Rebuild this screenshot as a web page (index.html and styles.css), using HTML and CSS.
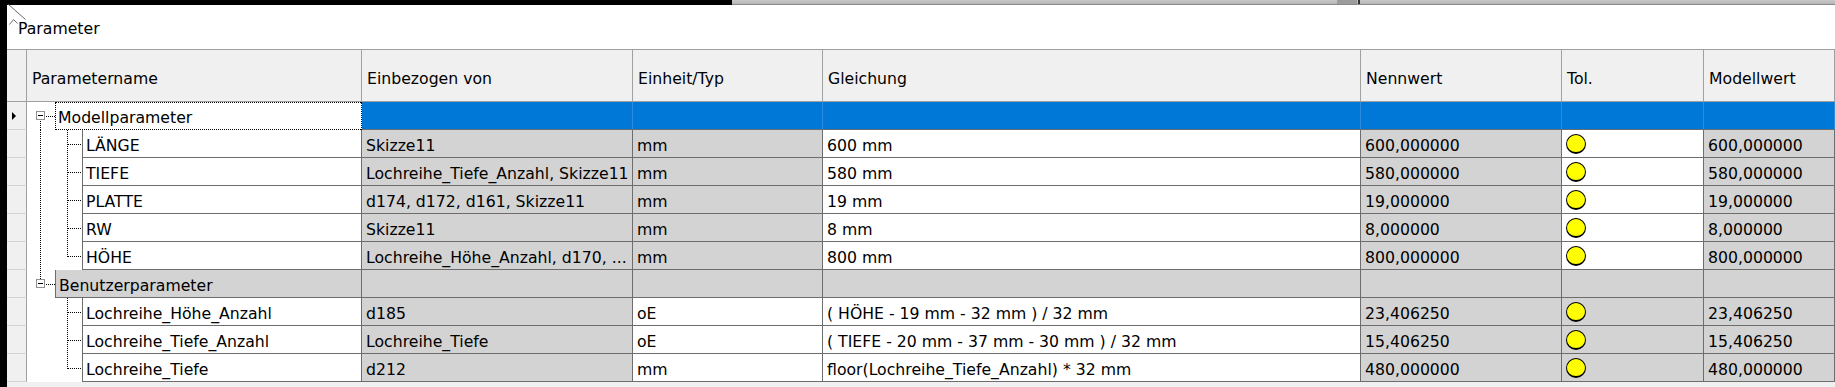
FILE: index.html
```html
<!DOCTYPE html>
<html lang="de">
<head>
  <meta charset="UTF-8" />
  <title>Parameter</title>
  <link rel="stylesheet" href="styles.css">
</head>
<body>

<div class="topbar">
  <div class="topbar-dark"></div>
  <div class="topbar-strip"><span class="thumb"></span><span class="grip"></span></div>
</div>

<div class="frame">
  <div class="edge"></div>
  <div class="window">
    <div class="title">Parameter</div>

    <div class="grid">
      <!-- column headers -->
      <div class="row head">
        <div class="cell rh"></div>
        <div class="cell">Parametername</div>
        <div class="cell">Einbezogen von</div>
        <div class="cell">Einheit/Typ</div>
        <div class="cell">Gleichung</div>
        <div class="cell">Nennwert</div>
        <div class="cell">Tol.</div>
        <div class="cell">Modellwert</div>
      </div>

      <!-- Modellparameter -->
      <div class="row sel">
        <div class="cell rh"><span class="arrow"></span></div>
        <div class="cell name focus">
          <svg class="tree group" width="28" height="28">
            <line x1="13.5" y1="19" x2="13.5" y2="28" class="dots"/>
            <line x1="19" y1="14.5" x2="28" y2="14.5" class="dots"/>
            <rect x="9.5" y="9.5" width="8" height="8" class="box"/>
            <line x1="11" y1="13.5" x2="16" y2="13.5" class="minus"/>
          </svg>
          <div class="label">Modellparameter</div>
        </div>
        <div class="cell"></div>
        <div class="cell"></div>
        <div class="cell"></div>
        <div class="cell"></div>
        <div class="cell"></div>
        <div class="cell"></div>
      </div>

      <div class="row">
        <div class="cell rh"></div>
        <div class="cell name">
          <svg class="tree child" width="55" height="28">
            <line x1="13.5" y1="0" x2="13.5" y2="28" class="dots"/>
            <line x1="40.5" y1="0" x2="40.5" y2="28" class="dots"/>
            <line x1="41" y1="14.5" x2="55" y2="14.5" class="dots"/>
          </svg>
          <div class="label">LÄNGE</div>
        </div>
        <div class="cell g">Skizze11</div>
        <div class="cell g">mm</div>
        <div class="cell">600 mm</div>
        <div class="cell g">600,000000</div>
        <div class="cell tol"><span class="dot"></span></div>
        <div class="cell g">600,000000</div>
      </div>

      <div class="row">
        <div class="cell rh"></div>
        <div class="cell name">
          <svg class="tree child" width="55" height="28">
            <line x1="13.5" y1="0" x2="13.5" y2="28" class="dots"/>
            <line x1="40.5" y1="0" x2="40.5" y2="28" class="dots"/>
            <line x1="41" y1="14.5" x2="55" y2="14.5" class="dots"/>
          </svg>
          <div class="label">TIEFE</div>
        </div>
        <div class="cell g">Lochreihe_Tiefe_Anzahl, Skizze11</div>
        <div class="cell g">mm</div>
        <div class="cell">580 mm</div>
        <div class="cell g">580,000000</div>
        <div class="cell tol"><span class="dot"></span></div>
        <div class="cell g">580,000000</div>
      </div>

      <div class="row">
        <div class="cell rh"></div>
        <div class="cell name">
          <svg class="tree child" width="55" height="28">
            <line x1="13.5" y1="0" x2="13.5" y2="28" class="dots"/>
            <line x1="40.5" y1="0" x2="40.5" y2="28" class="dots"/>
            <line x1="41" y1="14.5" x2="55" y2="14.5" class="dots"/>
          </svg>
          <div class="label">PLATTE</div>
        </div>
        <div class="cell g">d174, d172, d161, Skizze11</div>
        <div class="cell g">mm</div>
        <div class="cell">19 mm</div>
        <div class="cell g">19,000000</div>
        <div class="cell tol"><span class="dot"></span></div>
        <div class="cell g">19,000000</div>
      </div>

      <div class="row">
        <div class="cell rh"></div>
        <div class="cell name">
          <svg class="tree child" width="55" height="28">
            <line x1="13.5" y1="0" x2="13.5" y2="28" class="dots"/>
            <line x1="40.5" y1="0" x2="40.5" y2="28" class="dots"/>
            <line x1="41" y1="14.5" x2="55" y2="14.5" class="dots"/>
          </svg>
          <div class="label">RW</div>
        </div>
        <div class="cell g">Skizze11</div>
        <div class="cell g">mm</div>
        <div class="cell">8 mm</div>
        <div class="cell g">8,000000</div>
        <div class="cell tol"><span class="dot"></span></div>
        <div class="cell g">8,000000</div>
      </div>

      <div class="row">
        <div class="cell rh"></div>
        <div class="cell name">
          <svg class="tree child" width="55" height="28">
            <line x1="13.5" y1="0" x2="13.5" y2="28" class="dots"/>
            <line x1="40.5" y1="0" x2="40.5" y2="15" class="dots"/>
            <line x1="41" y1="14.5" x2="55" y2="14.5" class="dots"/>
          </svg>
          <div class="label">HÖHE</div>
        </div>
        <div class="cell g">Lochreihe_Höhe_Anzahl, d170, ...</div>
        <div class="cell g">mm</div>
        <div class="cell">800 mm</div>
        <div class="cell g">800,000000</div>
        <div class="cell tol"><span class="dot"></span></div>
        <div class="cell g">800,000000</div>
      </div>

      <!-- Benutzerparameter -->
      <div class="row grey">
        <div class="cell rh"></div>
        <div class="cell name">
          <svg class="tree group" width="28" height="28">
            <line x1="13.5" y1="0" x2="13.5" y2="10" class="dots"/>
            <line x1="19" y1="14.5" x2="28" y2="14.5" class="dots"/>
            <rect x="9.5" y="9.5" width="8" height="8" class="box"/>
            <line x1="11" y1="13.5" x2="16" y2="13.5" class="minus"/>
          </svg>
          <div class="label g">Benutzerparameter</div>
        </div>
        <div class="cell g"></div>
        <div class="cell g"></div>
        <div class="cell g"></div>
        <div class="cell g"></div>
        <div class="cell g"></div>
        <div class="cell g"></div>
      </div>

      <div class="row">
        <div class="cell rh"></div>
        <div class="cell name">
          <svg class="tree child" width="55" height="28">
            <line x1="40.5" y1="0" x2="40.5" y2="28" class="dots"/>
            <line x1="41" y1="14.5" x2="55" y2="14.5" class="dots"/>
          </svg>
          <div class="label">Lochreihe_Höhe_Anzahl</div>
        </div>
        <div class="cell g">d185</div>
        <div class="cell">oE</div>
        <div class="cell">( HÖHE - 19 mm - 32 mm ) / 32 mm</div>
        <div class="cell g">23,406250</div>
        <div class="cell g tol"><span class="dot"></span></div>
        <div class="cell g">23,406250</div>
      </div>

      <div class="row">
        <div class="cell rh"></div>
        <div class="cell name">
          <svg class="tree child" width="55" height="28">
            <line x1="40.5" y1="0" x2="40.5" y2="28" class="dots"/>
            <line x1="41" y1="14.5" x2="55" y2="14.5" class="dots"/>
          </svg>
          <div class="label">Lochreihe_Tiefe_Anzahl</div>
        </div>
        <div class="cell g">Lochreihe_Tiefe</div>
        <div class="cell">oE</div>
        <div class="cell">( TIEFE - 20 mm - 37 mm - 30 mm ) / 32 mm</div>
        <div class="cell g">15,406250</div>
        <div class="cell g tol"><span class="dot"></span></div>
        <div class="cell g">15,406250</div>
      </div>

      <div class="row">
        <div class="cell rh"></div>
        <div class="cell name">
          <svg class="tree child" width="55" height="28">
            <line x1="40.5" y1="0" x2="40.5" y2="15" class="dots"/>
            <line x1="41" y1="14.5" x2="55" y2="14.5" class="dots"/>
          </svg>
          <div class="label">Lochreihe_Tiefe</div>
        </div>
        <div class="cell g">d212</div>
        <div class="cell">mm</div>
        <div class="cell">floor(Lochreihe_Tiefe_Anzahl) * 32 mm</div>
        <div class="cell g">480,000000</div>
        <div class="cell g tol"><span class="dot"></span></div>
        <div class="cell g">480,000000</div>
      </div>
    </div>
  </div>
</div>

<!-- mouse pointer left over the window -->
<svg class="cursor" width="30" height="30">
  <polyline points="8.5,4.5 25.5,19.5" />
  <polyline points="9.5,24.5 13.5,19.5 17.5,23.5" />
</svg>

</body>
</html>
```

FILE: styles.css
```css
/* Base */
body {
  margin: 0;
  background: #000;
  font-family: "DejaVu Sans", sans-serif;
  font-size: 15.7px;
  color: #000;
  overflow: hidden;
}

/* top strip of the screen */
.topbar {
  display: flex;
  height: 5px;
}

.topbar-dark {
  width: 732px;
  background: #000;
}

.topbar-strip {
  flex: 1;
  display: flex;
  background: linear-gradient(#c9c9c9, #b5b5b5);
  border-bottom: 1px solid #8a8a8a;
  padding-left: 605px;
}

.topbar-strip .thumb {
  width: 20px;
  background: #9c9c9c;
}

.topbar-strip .grip {
  width: 2px;
  margin-left: 1px;
  background: #333;
}

.frame {
  display: flex;
  height: 382px;
}

.edge {
  width: 7px;
  background: #000;
}

.window {
  flex: 1;
  display: flex;
  flex-direction: column;
  background: #fff;
}

.title {
  height: 44px;
  display: flex;
  align-items: center;
  padding-left: 11px;
  padding-top: 2px;
  box-sizing: border-box;
}

/* Grid */
.grid {
  flex: 1;
  background: #f0f0f0;
  border-top: 1px solid #a0a0a0;
}

.row {
  display: grid;
  grid-template-columns: 20px 335px 271px 190px 538px 201px 142px 1fr;
  height: 28px;
}

.cell {
  display: flex;
  align-items: center;
  padding: 3px 4px 0;
  background: #fff;
  border-right: 1px solid #6d6d6d;
  border-bottom: 1px solid #6d6d6d;
  white-space: nowrap;
  overflow: hidden;
  box-sizing: border-box;
}

.cell.g {
  background: #d3d3d3;
}

.row.head {
  height: 52px;
}

.row.head .cell {
  background: #f0f0f0;
  border-right-color: #a0a0a0;
  border-bottom-color: #a0a0a0;
  padding-left: 5px;
  padding-top: 5px;
}

.cell.rh {
  background: #f0f0f0;
  padding: 0;
  border-right-color: #a0a0a0;
  border-bottom-color: #d4d4d4;
}

.row.head .cell.rh {
  border-bottom-color: #a0a0a0;
}

.arrow {
  margin-left: 5px;
  width: 0;
  height: 0;
  border-top: 4px solid transparent;
  border-bottom: 4px solid transparent;
  border-left: 4px solid #000;
}

/* tree column */
.cell.name {
  padding: 0;
  align-items: stretch;
  border-bottom: none;
}

.tree {
  flex: none;
  display: block;
}

.tree .dots {
  stroke: #000;
  stroke-width: 1;
  stroke-dasharray: 1 1;
}

.tree .box {
  fill: #fff;
  stroke: #919191;
}

.tree .minus {
  stroke: #000;
  stroke-width: 1;
}

.label {
  flex: 1;
  display: flex;
  align-items: center;
  padding: 3px 0 0 3px;
  background: #fff;
  border-left: 1px solid #6d6d6d;
  border-bottom: 1px solid #6d6d6d;
}

.label.g {
  background: #d3d3d3;
}

.cell.focus {
  border-right: 1px dotted #000;
}

.focus .label {
  border: 1px dotted #000;
  border-right: none;
  padding: 2px 0 0 2px;
}

/* selected row */
.row.sel .cell {
  background: #0078d7;
  border-right-color: #2b8cdc;
}

.row.sel .cell.rh,
.row.sel .cell.name {
  background: #fff;
}

.row.sel .cell.rh {
  background: #f0f0f0;
  border-right-color: #a0a0a0;
}

.row.sel .cell.name {
  border-right-color: #000;
}

/* tolerance marker */
.cell.tol {
  padding: 0 0 0 4px;
}

.dot {
  width: 18px;
  height: 17px;
  border: 1px solid #000;
  border-bottom-width: 2px;
  border-radius: 50%;
  background: #ffff00;
}

.cursor {
  position: absolute;
  left: 0;
  top: 0;
}

.cursor polyline {
  fill: none;
  stroke: #6a6a6a;
  stroke-width: 1;
}
```
